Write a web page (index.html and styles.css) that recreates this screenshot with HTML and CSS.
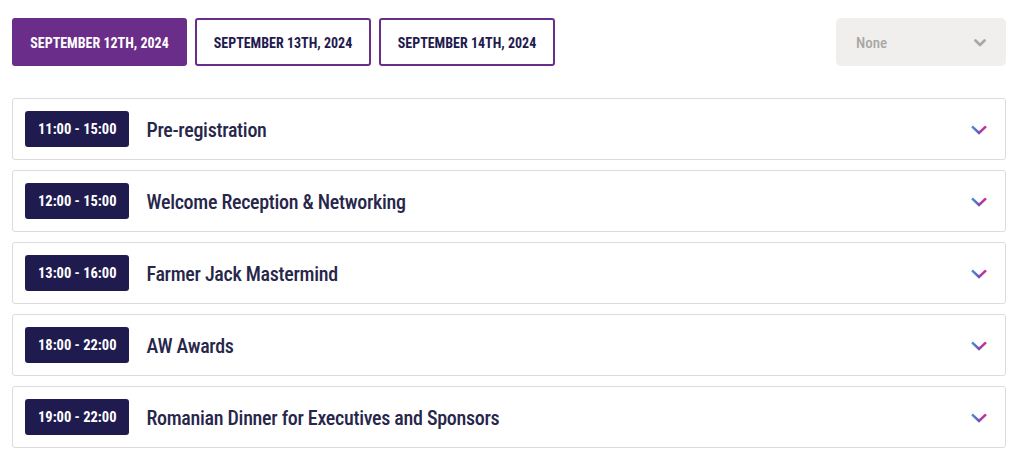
FILE: index.html
```html
<!DOCTYPE html>
<html lang="en">
<head>
<meta charset="utf-8">
<title>Agenda</title>
<link rel="stylesheet" href="styles.css">
</head>
<body>
<svg class="defs" width="0" height="0" aria-hidden="true"><defs><linearGradient id="g1" x1="0" y1="0" x2="1" y2="0"><stop offset="0" stop-color="#3a9ad9"/><stop offset="0.5" stop-color="#7d4fb5"/><stop offset="1" stop-color="#e0258a"/></linearGradient></defs></svg>
<div class="agenda">
  <div class="toolbar">
    <div class="tabs">
      <button class="tab active">SEPTEMBER 12TH, 2024</button>
      <button class="tab">SEPTEMBER 13TH, 2024</button>
      <button class="tab">SEPTEMBER 14TH, 2024</button>
    </div>
    <div class="select">
      <span class="select-label">None</span>
      <svg class="select-chev" width="12" height="8" viewBox="0 0 12 8"><path d="M1.5 1.5 L6 6 L10.5 1.5" fill="none" stroke="#a9a7a4" stroke-width="2.6" stroke-linecap="round" stroke-linejoin="round"/></svg>
    </div>
  </div>
  <div class="list">
    <div class="item"><span class="time">11:00 - 15:00</span><span class="title">Pre-registration</span><svg class="chev" width="16" height="10" viewBox="0 0 16 10"><path d="M1 1.3 L8 8 L15 1.3" fill="none" stroke="url(#g1)" stroke-width="2.5"/></svg></div>
    <div class="item"><span class="time">12:00 - 15:00</span><span class="title">Welcome Reception &amp; Networking</span><svg class="chev" width="16" height="10" viewBox="0 0 16 10"><path d="M1 1.3 L8 8 L15 1.3" fill="none" stroke="url(#g1)" stroke-width="2.5"/></svg></div>
    <div class="item"><span class="time">13:00 - 16:00</span><span class="title">Farmer Jack Mastermind</span><svg class="chev" width="16" height="10" viewBox="0 0 16 10"><path d="M1 1.3 L8 8 L15 1.3" fill="none" stroke="url(#g1)" stroke-width="2.5"/></svg></div>
    <div class="item"><span class="time">18:00 - 22:00</span><span class="title">AW Awards</span><svg class="chev" width="16" height="10" viewBox="0 0 16 10"><path d="M1 1.3 L8 8 L15 1.3" fill="none" stroke="url(#g1)" stroke-width="2.5"/></svg></div>
    <div class="item"><span class="time">19:00 - 22:00</span><span class="title">Romanian Dinner for Executives and Sponsors</span><svg class="chev" width="16" height="10" viewBox="0 0 16 10"><path d="M1 1.3 L8 8 L15 1.3" fill="none" stroke="url(#g1)" stroke-width="2.5"/></svg></div>
  </div>
</div>
</body>
</html>
```
FILE: styles.css
```css
* { box-sizing: border-box; }
body {
  margin: 0;
  background: #fff;
  font-family: Roboto, "Open Sans", sans-serif;
  font-stretch: 75%;
}
.defs { position: absolute; width: 0; height: 0; }
.agenda {
  padding: 18px 13px 0 12px;
}
.toolbar {
  display: flex;
  justify-content: space-between;
  align-items: flex-start;
}
.tabs {
  display: flex;
  gap: 8px;
}
.tab {
  height: 48px;
  width: 176px;
  border: 2px solid #6a2d8a;
  border-radius: 3px;
  background: #fff;
  color: #1f1b4f;
  font-family: inherit;
  font-stretch: 75%;
  font-weight: 700;
  font-size: 14px;
  cursor: pointer;
  padding: 2px 0 0;
}
.tab.active {
  width: 175px;
  background: #6a2d8a;
  color: #fff;
}
.select {
  width: 170px;
  height: 48px;
  background: #f0efed;
  border-radius: 5px;
  display: flex;
  align-items: center;
  justify-content: space-between;
  padding: 2px 20px 0 20px;
  color: #a9a7a4;
  font-size: 15px;
  font-weight: 500;
}
.list {
  margin-top: 32px;
  display: flex;
  flex-direction: column;
  gap: 10px;
}
.item {
  height: 62px;
  border: 1px solid #dcdcdc;
  border-radius: 3px;
  display: flex;
  align-items: center;
  padding: 0 18px 0 12px;
}
.time {
  background: #1f1b4f;
  color: #fff;
  font-weight: 700;
  font-size: 14.5px;
  height: 36px;
  display: flex;
  align-items: center;
  padding: 1px 13px 0;
  border-radius: 3px;
}
.title {
  margin-left: 17px;
  padding-top: 2px;
  font-size: 20px;
  font-weight: 500;
  letter-spacing: -0.3px;
  color: #27264b;
  flex: 1;
}
.chev { flex: none; margin-top: 1px; }
```
